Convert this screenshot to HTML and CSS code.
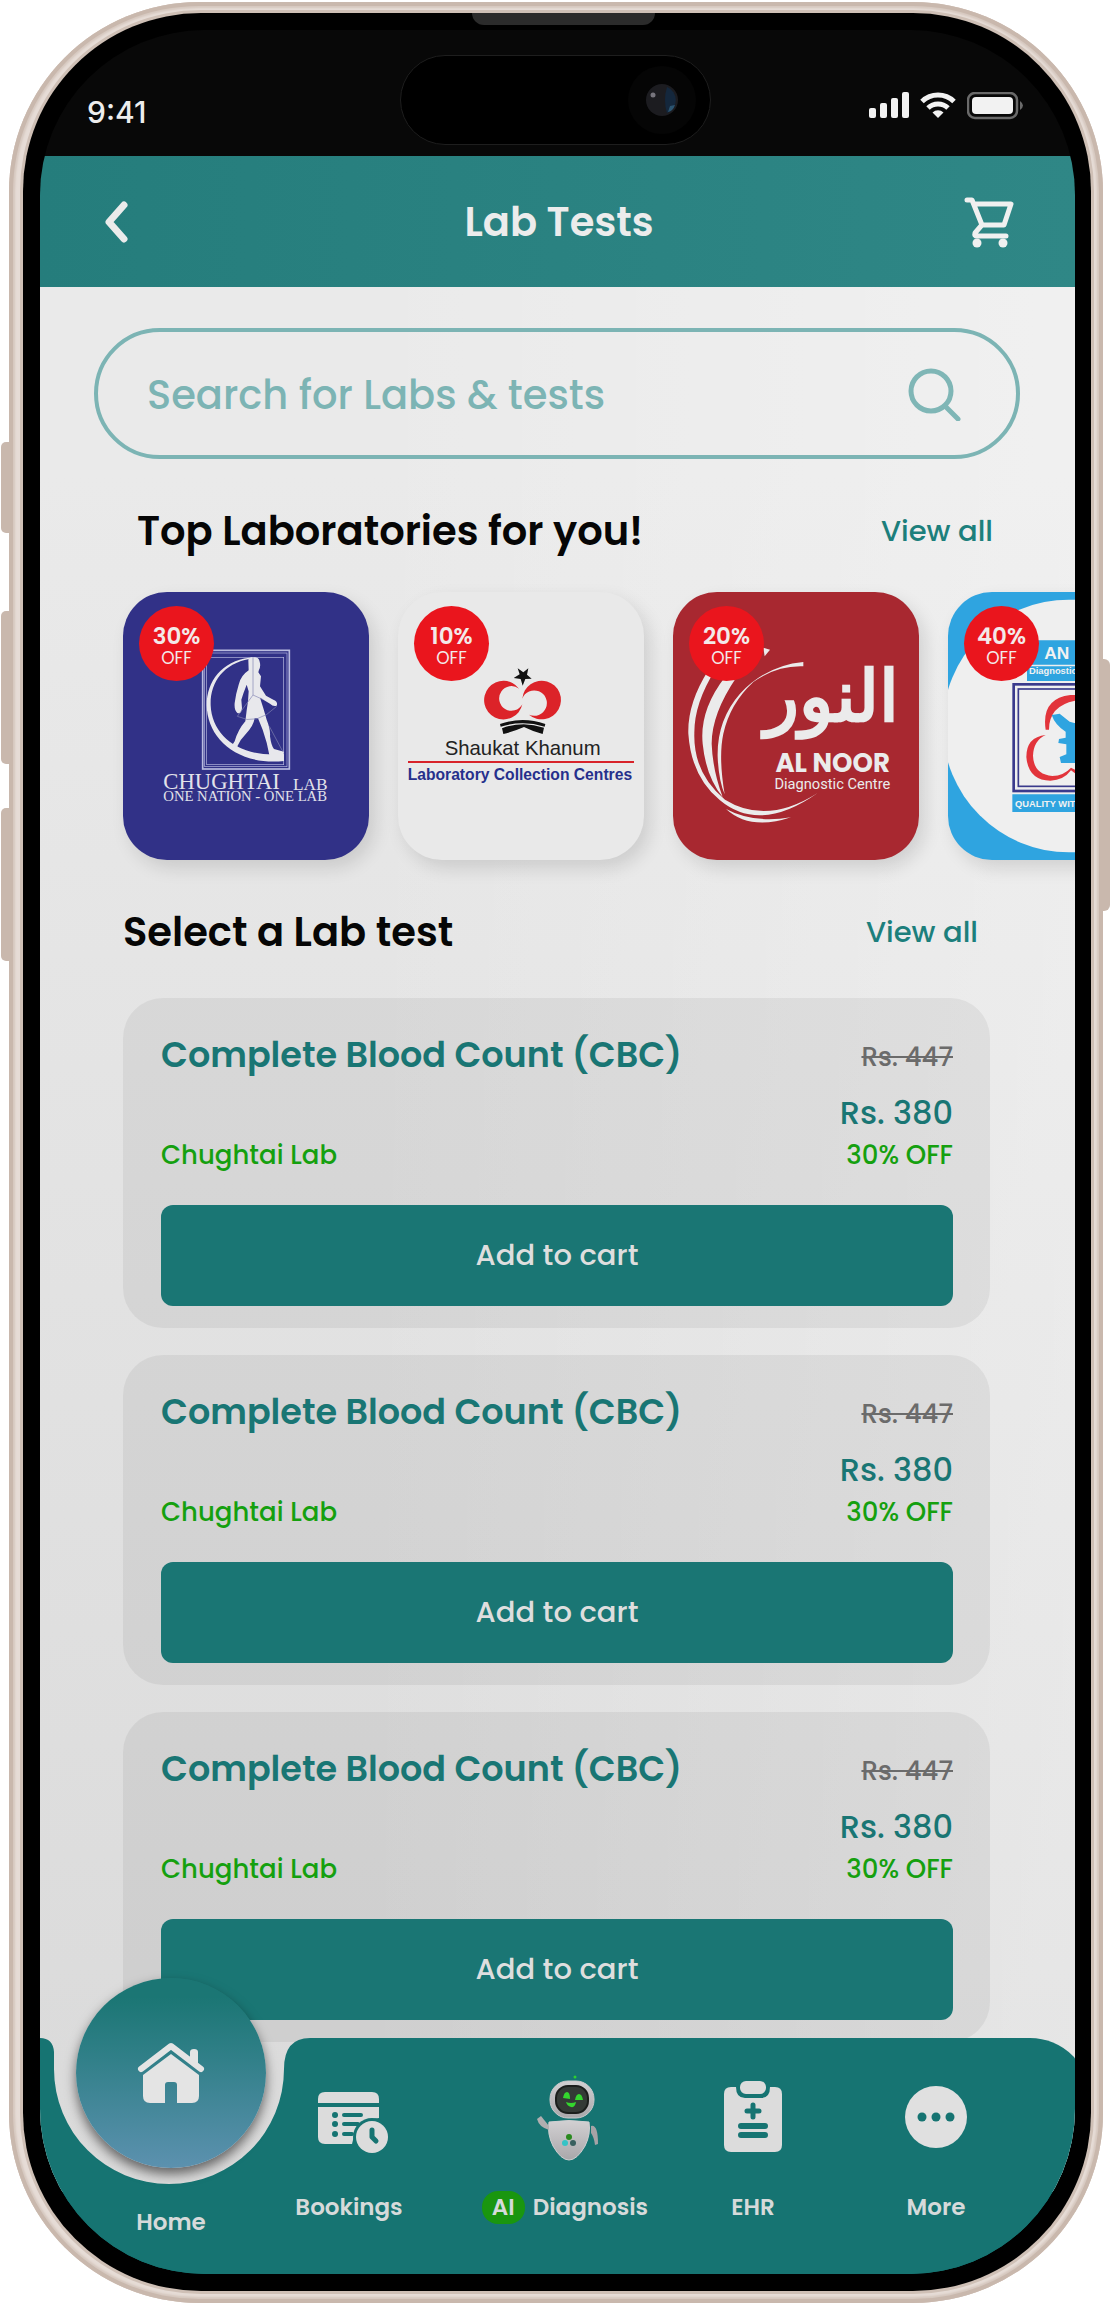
FILE: index.html
```html
<!DOCTYPE html>
<html lang="en">
<head>
    <meta charset="UTF-8">
    <meta name="viewport" content="width=device-width, initial-scale=1.0">
    <title>Lab Tests</title>
    <link rel="stylesheet" href="styles.css">
</head>
<body>
    <div class="phone">
        <span class="side-button action"></span>
        <span class="side-button volume-up"></span>
        <span class="side-button volume-down"></span>
        <span class="side-button power"></span>
        <div class="bezel">
            <span class="speaker"></span>
            <div class="screen">
                <div class="status-bar">
                    <span class="time">9:41</span>
                    <div class="island">
                        <svg width="68" height="68" viewBox="0 0 68 68">
                            <circle cx="34" cy="34" r="34" fill="#050505"/>
                            <circle cx="34" cy="34" r="16" fill="#1c1c20"/>
                            <path d="M39 21a14 14 0 0 1 0 26q-4-13 0-26z" fill="#14273c"/>
                            <path d="M42 40l5-1q-2 6-7 7z" fill="#2b5470"/>
                            <circle cx="25" cy="29" r="2.500" fill="#77757d"/>
                        </svg>
                    </div>
                    <div class="status-icons">
                        <svg width="40" height="26" viewBox="0 0 40 26" fill="#f2f2f2">
                            <rect x="0" y="16" width="7" height="10" rx="2"/>
                            <rect x="11" y="11" width="7" height="15" rx="2"/>
                            <rect x="22" y="6" width="7" height="20" rx="2"/>
                            <rect x="33" y="0" width="7" height="26" rx="2"/>
                        </svg>
                        <svg width="36" height="26" viewBox="0 0 36 26" fill="none" stroke="#f2f2f2" stroke-width="5">
                            <path d="M2 9.500a23 23 0 0 1 32 0"/>
                            <path d="M8 16a14.500 14.500 0 0 1 20 0"/>
                            <path d="M18 26l-5.500-5.500a8 8 0 0 1 11 0z" fill="#f2f2f2" stroke="none"/>
                        </svg>
                        <svg width="56" height="28" viewBox="0 0 56 28">
                            <rect x="1" y="1" width="49" height="25" rx="7" fill="none" stroke="#6a6a6a" stroke-width="2.500"/>
                            <rect x="5" y="5" width="41" height="17" rx="4" fill="#f2f2f2"/>
                            <path d="M53 9q6 4.500 0 9z" fill="#6a6a6a"/>
                        </svg>
                    </div>
                </div>

                <header class="header">
                    <button class="icon-button" aria-label="Back">
                        <svg width="24" height="44" viewBox="0 0 24 44"><path d="M20 5L5 22l15 17" fill="none" stroke="#ebebeb" stroke-width="7" stroke-linecap="round" stroke-linejoin="round"/></svg>
                    </button>
                    <h1>Lab Tests</h1>
                    <button class="icon-button cart" aria-label="Cart">
                        <svg width="50" height="52" viewBox="0 0 50 52" fill="none" stroke="#f0f0f0" stroke-width="5" stroke-linejoin="round" stroke-linecap="round">
                            <path d="M3 4h5l10 25h22l7-21H10"/>
                            <path d="M17 30l-6 7q-1 3 2 3h29"/>
                            <circle cx="13" cy="47" r="4.500" fill="#f0f0f0" stroke="none"/>
                            <circle cx="39" cy="47" r="4.500" fill="#f0f0f0" stroke="none"/>
                        </svg>
                    </button>
                </header>

                <main>
                    <form class="search">
                        <input type="text" placeholder="Search for Labs &amp; tests" aria-label="Search for Labs and tests">
                        <button type="button" class="icon-button" aria-label="Search">
                            <svg width="54" height="54" viewBox="0 0 54 54" fill="none" stroke="#7fb6b6" stroke-width="5" stroke-linecap="round">
                                <circle cx="23" cy="24" r="20"/>
                                <path d="M37 39l13 13"/>
                            </svg>
                        </button>
                    </form>

                    <div class="section-head labs-head">
                        <h2>Top Laboratories for you!</h2>
                        <a href="#">View all</a>
                    </div>

                    <div class="labs">
                        <a href="#" class="lab chughtai">
                            <svg viewBox="69 68 738 802">
                                <g fill="none" stroke="#b9bbe0" stroke-width="3">
                                    <rect x="308" y="242" width="260" height="356" stroke-width="5"/>
                                    <rect x="314" y="250" width="247" height="341" stroke-width="2"/>
                                    <rect x="320" y="263" width="231" height="322" stroke-width="2"/>
                                </g>
                                <path d="M448 264C366 274 320 334 320 407C322 505 408 588 552 574V553C420 566 336 500 332 407C330 338 370 282 448 268z" fill="#e8e8ec"/>
                                <path d="M445 272q0-10 14-10q18 0 20 14q4 14-2 24l-2 8l8 12L480 350L498 378L520 390Q535 396 530 408Q520 412 510 402L480 384Q492 420 500 450Q512 480 510 500Q514 530 522 538L552 546L550 556H508Q502 520 488 480L474 446H464Q460 470 438 492Q420 510 412 530L420 545L398 540Q392 530 404 515Q414 480 436 455Q440 420 444 395L446 365L440 345Q430 370 424 390L426 415Q424 435 412 430Q402 420 404 400Q408 370 416 345Q422 318 446 302Z" fill="#e8e8ec"/>
                                <path d="M459 262V376L412 440Q470 470 530 410M459 376L490 390M508 470L548 545" fill="none" stroke="#8385b4" stroke-width="2"/>
                                <g class="serif" fill="#e2e2ea">
                                    <text x="190" y="657" font-size="68">CHUGHTAI</text>
                                    <text x="579" y="661" font-size="52">LAB</text>
                                    <text x="190" y="694" font-size="44">ONE NATION - ONE LAB</text>
                                </g>
                            </svg>
                            <span class="discount"><b>30%</b>OFF</span>
                        </a>
                        <a href="#" class="lab shaukat">
                            <svg viewBox="54 66 738 802">
                                <path d="M413 294l17 12 15-12-4 19 14 12-19 1-8 20-6-20-21-3 18-11z" fill="#111"/>
                                <g fill="#dc2329">
                                    <path d="M417 355A58 58 0 1 0 427 402A37 37 0 1 1 417 355z"/>
                                    <path d="M427 385A58 58 0 1 1 447 433A38 38 0 1 0 427 385z"/>
                                </g>
                                <path d="M360 461Q428 437 496 461L494 469Q428 449 362 469zM366 474Q428 450 492 472L488 491Q460 484 432 470Q400 484 370 491z" fill="#111"/>
                                <text x="194" y="555" font-size="61" fill="#222">Shaukat Khanum</text>
                                <path d="M84 575H762" stroke="#d8232a" stroke-width="6"/>
                                <text x="83" y="628" font-size="47" font-weight="700" fill="#26308c">Laboratory Collection Centres</text>
                            </svg>
                            <span class="discount"><b>10%</b>OFF</span>
                        </a>
                        <a href="#" class="lab alnoor">
                            <svg viewBox="69 66 738 802" fill="#ebebeb">
                                <path d="M175 300Q112 400 115 490Q124 620 210 690Q330 790 503 668Q350 765 225 688Q130 610 133 490Q132 400 195 300z"/>
                                <path d="M225 320Q148 420 158 520Q168 620 218 680Q188 600 185 520Q185 430 260 320z"/>
                                <path d="M460 275Q350 285 270 370Q200 450 203 560Q206 630 224 672Q205 560 220 490Q240 400 310 335Q380 285 460 288z"/>
                                <path d="M228 716Q300 782 423 741Q310 760 228 716z"/>
                                <path d="M340 232l20 6-16 20z"/>
                                <text class="arabic" x="545" y="452" font-size="214" text-anchor="middle" stroke="#ebebeb" stroke-width="8">النور</text>
                                <text class="poppins" x="548" y="605" font-size="78" font-weight="700" text-anchor="middle">AL NOOR</text>
                                <text class="roboto" x="547" y="655" font-size="44" text-anchor="middle">Diagnostic Centre</text>
                            </svg>
                            <span class="discount"><b>20%</b>OFF</span>
                        </a>
                        <a href="#" class="lab quality">
                            <svg viewBox="893 66 738 802">
                                <circle cx="1256" cy="467" r="379" fill="#efefef"/>
                                <path d="M1130 210h300v73h-300zM1130 288h300v44h-300zM1086 672h340v53h-340z" fill="#2fa4e0"/>
                                <g fill="#f2f2f2" font-weight="700">
                                    <text x="1182" y="267" font-size="52">AN</text>
                                    <text x="1136" y="310" font-size="28">Diagnostic</text>
                                    <text x="1094" y="709" font-size="28">QUALITY WITH</text>
                                </g>
                                <g fill="none" stroke="#3a3a8c">
                                    <rect x="1090" y="342" width="330" height="320" stroke-width="8"/>
                                    <rect x="1104" y="356" width="302" height="292" stroke-width="5"/>
                                </g>
                                <path d="M1186 478Q1172 385 1260 374H1300V388Q1196 396 1196 478zM1186 494Q1128 500 1128 560Q1134 630 1200 631Q1240 630 1262 600L1290 620V606L1262 592Q1240 616 1206 617Q1150 612 1148 556Q1150 510 1186 494z" fill="#e2343b"/>
                                <path d="M1204 434l24-4 30 24 14 4h30v120h-70l-4-18 20-8v-30l-24-4 2-12 20-4v-18q-32-20-42-50z" fill="#2fa4e0"/>
                            </svg>
                            <span class="discount"><b>40%</b>OFF</span>
                        </a>
                    </div>

                    <div class="section-head tests-head">
                        <h2>Select a Lab test</h2>
                        <a href="#">View all</a>
                    </div>

                    <div class="tests">
                        <article class="test">
                            <div class="test-info">
                                <div class="test-name">
                                    <h3>Complete Blood Count (CBC)</h3>
                                    <span class="green">Chughtai Lab</span>
                                </div>
                                <div class="test-price">
                                    <del>Rs. 447</del>
                                    <strong>Rs. 380</strong>
                                    <span class="green">30% OFF</span>
                                </div>
                            </div>
                            <button class="add">Add to cart</button>
                        </article>
                        <article class="test">
                            <div class="test-info">
                                <div class="test-name">
                                    <h3>Complete Blood Count (CBC)</h3>
                                    <span class="green">Chughtai Lab</span>
                                </div>
                                <div class="test-price">
                                    <del>Rs. 447</del>
                                    <strong>Rs. 380</strong>
                                    <span class="green">30% OFF</span>
                                </div>
                            </div>
                            <button class="add">Add to cart</button>
                        </article>
                        <article class="test">
                            <div class="test-info">
                                <div class="test-name">
                                    <h3>Complete Blood Count (CBC)</h3>
                                    <span class="green">Chughtai Lab</span>
                                </div>
                                <div class="test-price">
                                    <del>Rs. 447</del>
                                    <strong>Rs. 380</strong>
                                    <span class="green">30% OFF</span>
                                </div>
                            </div>
                            <button class="add">Add to cart</button>
                        </article>
                    </div>
                </main>

                <nav class="tab-bar">
                    <div class="tab-bg">
                        <svg width="270" height="236" viewBox="0 0 270 236"><path d="M0 0Q13 0 14 14V31A115 115 0 0 0 244 31Q244 0 270 0V236H0z" fill="#167472"/></svg>
                        <div class="tab-fill"></div>
                    </div>
                    <a href="#" class="tab home">
                        <span class="home-circle">
                            <svg width="68" height="62" viewBox="0 0 68 62" fill="#e4e4e4">
                                <path d="M53 18V10q0-3 4-3t4 3v18z"/>
                                <path d="M4 27L34 4l30 23" fill="none" stroke="#e4e4e4" stroke-width="6" stroke-linecap="round" stroke-linejoin="round"/>
                                <path d="M34 12L62 33V54q0 7-7 7H40V43q0-3-3-3H31q-3 0-3 3V61H13q-7 0-7-7V33z"/>
                            </svg>
                        </span>
                        <span class="tab-label">Home</span>
                    </a>
                    <a href="#" class="tab">
                        <svg width="80" height="88" viewBox="-8 0 80 88" fill="#dcdcdc">
                            <path d="M1 29v-4q0-7 7-7h47q7 0 7 7v4zM1 33h61v11q-22 2-26 22l-1 4H8q-7 0-7-7z"/>
                            <g fill="none" stroke="#167472" stroke-width="4" stroke-linecap="round">
                                <path d="M18 41h.010M18 50h.010M18 60h.010" stroke-width="6"/>
                                <path d="M27 41h17M27 50h14M27 60h8"/>
                            </g>
                            <circle cx="55" cy="63" r="19" fill="#167472"/>
                            <circle cx="55" cy="63" r="16"/>
                            <path d="M55 56v7l4 4" fill="none" stroke="#167472" stroke-width="5" stroke-linecap="round" stroke-linejoin="round"/>
                        </svg>
                        <span class="tab-label">Bookings</span>
                    </a>
                    <a href="#" class="tab">
                        <svg width="78" height="88" viewBox="-6 0 78 88">
                            <defs>
                                <linearGradient id="shell" x1="0" y1="0" x2="0" y2="1">
                                    <stop offset="0" stop-color="#d2d0d2"/>
                                    <stop offset="1" stop-color="#a9a7aa"/>
                                </linearGradient>
                            </defs>
                            <circle cx="43" cy="3" r="1.500" fill="#2ed12e"/>
                            <rect x="18" y="7" width="44" height="37" rx="18" fill="url(#shell)" stroke="#c9c9cb"/>
                            <rect x="24" y="12" width="32" height="27" rx="12" fill="#343a36" stroke="#1b1e1c" stroke-width="2"/>
                            <path d="M31 24q1-6 4-6t3 7zM43 26q1-6 4-6t4 6zM34 28q5 2 10 0q-1 6-5 5t-5-5z" fill="#34d62e"/>
                            <path d="M17 48q20-3 40 0q2 12-4 24q-8 14-16 14t-16-14q-6-12-4-24z" fill="url(#shell)" stroke="#cfcfd1"/>
                            <path d="M5 45l4-3 8 10v4q-10-3-12-11z" fill="#b0aeb0"/>
                            <path d="M59 52q7-2 7 18l-3 1q-1-8-4-12z" fill="#a5a3a6"/>
                            <circle cx="37" cy="63" r="3" fill="#2a8a1e"/>
                            <circle cx="33" cy="69" r="3" fill="#35c3c6"/>
                            <circle cx="41" cy="69" r="3" fill="#39605f"/>
                        </svg>
                        <span class="tab-label"><i>AI</i>Diagnosis</span>
                    </a>
                    <a href="#" class="tab">
                        <svg width="60" height="88" viewBox="0 0 60 88" fill="#dcdcdc">
                            <path d="M8 13h5q0 11 9 11h16q9 0 9-11h5q7 0 7 7v51q0 7-7 7H8q-7 0-7-7V20q0-7 7-7z"/>
                            <rect x="17" y="7" width="26" height="13" rx="6"/>
                            <path d="M30 31v12M24 37h12" stroke="#167472" stroke-width="5" stroke-linecap="round"/>
                            <path d="M18 52h24M18 61h24" stroke="#167472" stroke-width="6" stroke-linecap="round"/>
                        </svg>
                        <span class="tab-label">EHR</span>
                    </a>
                    <a href="#" class="tab">
                        <svg width="64" height="88" viewBox="0 0 64 88">
                            <circle cx="32" cy="43" r="31" fill="#e0e0e0"/>
                            <g fill="#167472"><circle cx="18" cy="43" r="4.500"/><circle cx="32" cy="43" r="4.500"/><circle cx="46" cy="43" r="4.500"/></g>
                        </svg>
                        <span class="tab-label">More</span>
                    </a>
                </nav>
            </div>
        </div>
    </div>
</body>
</html>
```

FILE: styles.css
```css
* {
    box-sizing: border-box;
}
body {
    margin: 0;
    padding: 2px 8px 3px 9px;
    background: #fff;
    font-family: Poppins, Inter, sans-serif;
}
h1, h2, h3 {
    margin: 0;
    font-weight: 600;
}
a {
    text-decoration: none;
    color: #1c7f7c;
}
svg {
    display: block;
}
button {
    border: none;
    font-family: inherit;
    cursor: pointer;
}
.icon-button {
    background: none;
    padding: 0;
}

/* device */
.phone {
    position: relative;
    padding: 11px 12px 12px 14px;
    border-radius: 190px;
    background: #e6dcd6;
    box-shadow: inset 0 0 0 4px #c9b8ad, inset 0 0 2px 6px #d6c8bf;
}
.bezel {
    position: relative;
    padding: 17px 16px 17px 17px;
    border-radius: 178px;
    background: #000;
    box-shadow: 0 0 0 3px #cfc0b6;
}
.side-button {
    position: absolute;
    left: -8px;
    width: 9px;
    border-radius: 5px 0 0 5px;
    background: #c9b8ad;
}
.action {
    top: 440px;
    height: 91px;
}
.volume-up {
    top: 609px;
    height: 153px;
}
.volume-down {
    top: 806px;
    height: 153px;
}
.power {
    left: auto;
    right: -7px;
    top: 657px;
    height: 252px;
    border-radius: 0 6px 6px 0;
}
.speaker {
    position: absolute;
    top: 0;
    left: calc(50% - 85px);
    width: 183px;
    height: 12px;
    border-radius: 0 0 12px 12px;
    background: #2b2b2b;
}
.screen {
    position: relative;
    overflow: hidden;
    border-radius: 165px;
    background: linear-gradient(#080808 50%, #167472 50%);
}

/* status bar */
.status-bar {
    display: grid;
    grid-template-columns: 1fr 311px 1fr;
    height: 126px;
    padding: 25px 52px 0 47px;
    color: #ededed;
}
.time {
    margin-top: 39px;
    font-size: 30px;
    line-height: 36px;
    font-weight: 500;
    font-family: Inter, sans-serif;
}
.island {
    display: flex;
    align-items: center;
    justify-content: flex-end;
    height: 90px;
    padding-right: 14px;
    border: 1px solid #1e1e1e;
    border-radius: 45px;
    background: #000;
}
.status-icons {
    display: flex;
    justify-content: flex-end;
    gap: 11px;
    margin-top: 37px;
}

/* header */
.header {
    display: grid;
    grid-template-columns: 1fr auto 1fr;
    align-items: center;
    justify-items: start;
    height: 131px;
    padding: 0 61px 0 64px;
    background: linear-gradient(to right, #257d7c, #2f8786);
}
.header h1 {
    font-size: 40px;
    color: #ececec;
}
.cart {
    justify-self: end;
}

/* the page runs on behind the notch of the tab bar */
main {
    padding: 41px 0 150px;
    background:
        linear-gradient(to right, rgba(255, 255, 255, 0) 30%, rgba(255, 255, 255, 0.3)),
        linear-gradient(#eaeaea 10%, #e5e5e5 35%, #dadada);
}

/* search */
.search {
    display: flex;
    align-items: center;
    height: 131px;
    margin: 0 55px 0 54px;
    padding: 0 54px 0 49px;
    border: 4px solid #7cb4b4;
    border-radius: 66px;
}
.search input {
    flex: 1;
    min-width: 0;
    padding: 2px 0 0;
    border: none;
    outline: none;
    background: none;
    font-family: inherit;
    font-size: 40px;
    font-weight: 500;
    color: #1c7f7c;
}
.search input::placeholder {
    color: #7cb4b4;
    opacity: 1;
}

/* laboratories */
.section-head {
    display: flex;
    align-items: center;
    justify-content: space-between;
    line-height: 60px;
}
.section-head h2 {
    font-size: 40px;
    color: #060606;
}
.section-head a {
    font-size: 29px;
    font-weight: 500;
}
.labs-head {
    padding: 42px 82px 31px 97px;
}
.tests-head {
    padding: 42px 97px 36px 83px;
}
.labs {
    display: flex;
    gap: 29px;
    padding-left: 83px;
}
.lab {
    position: relative;
    flex: none;
    width: 246px;
    height: 268px;
    border-radius: 44px;
    box-shadow: 6px 8px 18px rgba(0, 0, 0, 0.12);
}
.lab svg {
    width: 100%;
    height: 100%;
    border-radius: 44px;
    font-family: "Liberation Sans", Arial, sans-serif;
}
.chughtai {
    background: #313187;
}
.shaukat {
    background: #e9e9e9;
}
.alnoor {
    background: #a82830;
}
.quality {
    background: #2fa4e0;
}
.serif {
    font-family: "Liberation Serif", serif;
}
.arabic {
    font-family: "DejaVu Sans", sans-serif;
}
.poppins {
    font-family: Poppins, Inter, sans-serif;
}
.roboto {
    font-family: Roboto, sans-serif;
}
.discount {
    position: absolute;
    top: 14px;
    left: 16px;
    display: flex;
    flex-direction: column;
    align-items: center;
    justify-content: center;
    width: 75px;
    height: 75px;
    padding-top: 4px;
    border-radius: 50%;
    background: #ea151d;
    color: #f3e9e9;
    font-size: 17px;
    line-height: 20px;
}
.discount b {
    font-size: 23px;
    line-height: 24px;
    font-weight: 600;
}

/* tests */
.tests {
    display: flex;
    flex-direction: column;
    gap: 27px;
    padding: 0 85px 0 83px;
}
.test {
    padding: 40px 37px 22px 38px;
    border-radius: 40px;
    background: rgba(0, 0, 0, 0.055);
}
.test-info {
    display: flex;
    justify-content: space-between;
    margin-bottom: 29px;
}
.test-name, .test-price {
    display: flex;
    flex-direction: column;
    justify-content: space-between;
}
.test-price {
    align-items: flex-end;
}
.test h3 {
    font-size: 35px;
    line-height: 34px;
    color: #197674;
}
.test del {
    margin-bottom: 16px;
    font-size: 26px;
    line-height: 38px;
    font-weight: 500;
    color: #6b6b6b;
}
.test strong {
    font-size: 32px;
    line-height: 42px;
    font-weight: 500;
    color: #197674;
}
.green {
    font-size: 26px;
    line-height: 42px;
    font-weight: 500;
    color: #15a00f;
}
.add {
    display: block;
    width: 100%;
    height: 101px;
    border-radius: 12px;
    background: #1a7674;
    color: #dedede;
    font-size: 29px;
    font-weight: 500;
}

/* tab bar */
.tab-bar {
    position: relative;
    display: grid;
    grid-template-columns: 178fr 178fr 254fr 122fr 244fr;
    height: 236px;
    margin-top: -154px;
    padding: 36px 17px 0 42px;
}
.tab-bg {
    position: absolute;
    inset: 0 -15px 0 0;
    display: flex;
}
.tab-fill {
    flex: 1;
    border-radius: 0 60px 0 0;
    background: #167472;
}
.tab {
    position: relative;
    display: flex;
    flex-direction: column;
    align-items: center;
    gap: 29px;
}
.home {
    padding-top: 132px;
}
.home-circle {
    position: absolute;
    top: -96px;
    display: flex;
    align-items: center;
    justify-content: center;
    width: 190px;
    height: 190px;
    border-radius: 50%;
    background: linear-gradient(#1b7674 10%, #2f7f87 40%, #5c91af);
    box-shadow: 0 6px 12px rgba(0, 0, 0, 0.55);
}
.tab-label {
    display: flex;
    align-items: center;
    gap: 8px;
    font-size: 23px;
    line-height: 33px;
    font-weight: 600;
    color: #d6dada;
}
.tab-label i {
    padding: 0 10px;
    border-radius: 16px;
    background: #1a960f;
    font-style: normal;
}
```
